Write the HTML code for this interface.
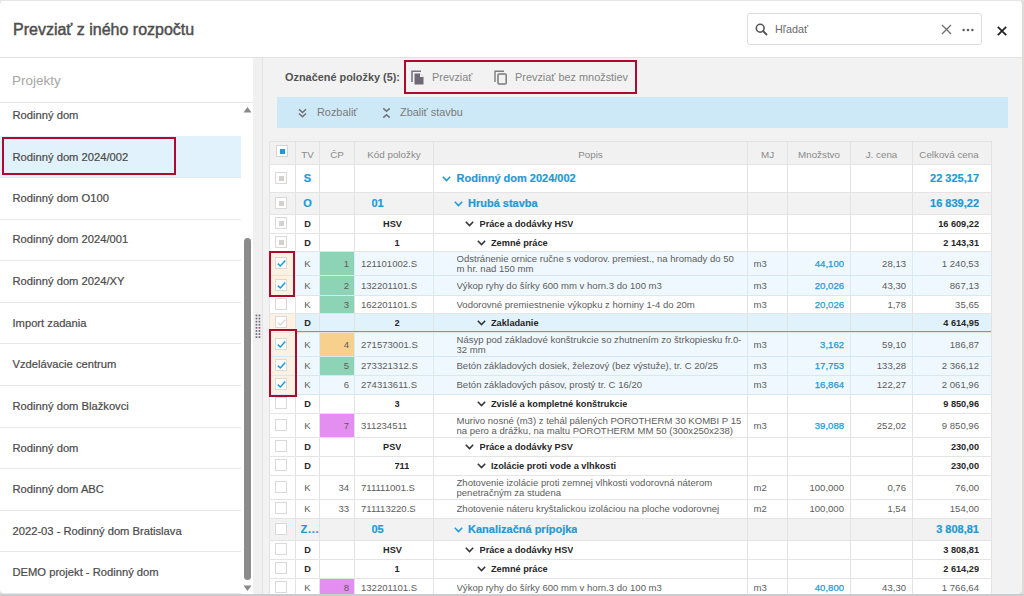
<!DOCTYPE html>
<html><head><meta charset="utf-8"><style>
*{box-sizing:border-box;margin:0;padding:0}
html,body{width:1024px;height:596px;overflow:hidden;background:#dedbd9;font-family:"Liberation Sans", sans-serif}
#topstrip{position:absolute;left:0;top:0;width:1024px;height:1px;background:#e6e6e6}
#botstrip{position:absolute;left:0;top:594px;width:1024px;height:2px;background:#cbcccd}
#modal{position:absolute;left:0;top:0;width:1022px;height:594px;background:#fff;border-radius:5px;overflow:hidden}
#hdr{position:absolute;left:0;top:1px;width:1022px;height:57px;border-bottom:1px solid #e2e2e2;background:#fff}
#title{position:absolute;left:13px;top:20.5px;font-size:16px;line-height:16px;color:#4e4e4e;white-space:nowrap;-webkit-text-stroke:0.45px #4e4e4e}
#search{position:absolute;left:747px;top:12px;width:235px;height:32px;border:1px solid #dcdcdc;border-radius:3px;background:#fff}
#search .ph{position:absolute;left:27px;top:10px;font-size:10.8px;line-height:11px;color:#6a6a6a}
#side{position:absolute;left:0;top:58px;width:253px;height:536px;background:#fff;overflow:hidden}
#side .proj{position:absolute;left:12px;top:16px;font-size:13.5px;line-height:13px;color:#a6a6a6}
#side .sep0{position:absolute;left:0;top:44px;width:253px;height:1px;background:#e4e4e4}
.item{position:absolute;left:0;width:241px;font-size:11.2px;color:#4a4a4a;padding-left:13px;white-space:nowrap;-webkit-text-stroke:0.2px #4a4a4a}
.item span{position:absolute;left:12.5px}
.sepl{position:absolute;left:0;width:241px;height:1px;background:#e8e8e8}
#splitter{position:absolute;left:253px;top:58px;width:10px;height:536px;background:#f0f0f0;border-right:1px solid #e4e4e4}
#content{position:absolute;left:263px;top:58px;width:759px;height:536px;background:#f2f2f2}
.abs{position:absolute;white-space:nowrap}
.redbox{position:absolute;border:2px solid #ad0a2e}
.cell{position:absolute;white-space:nowrap;overflow:hidden}
</style></head><body>
<div id="botstrip"></div><div id="modal">
<div id="hdr"><div id="title">Prevziať z iného rozpočtu</div>
<div id="search"><svg class="abs" style="left:7px;top:9px" width="14" height="14" viewBox="0 0 14 14"><circle cx="5.2" cy="5.2" r="3.9" fill="none" stroke="#555" stroke-width="1.6"/><line x1="8" y1="8" x2="11.5" y2="11.5" stroke="#555" stroke-width="1.8" stroke-linecap="round"/></svg><span class="ph">Hľadať</span><svg class="abs" style="left:193px;top:10px" width="11" height="11" viewBox="0 0 11 11"><path d="M1 1L10 10M10 1L1 10" stroke="#6f6f6f" stroke-width="1.3"/></svg><svg class="abs" style="left:214px;top:13.5px" width="12" height="4" viewBox="0 0 12 4"><circle cx="1.6" cy="2" r="1.25" fill="#5a5a5a"/><circle cx="6" cy="2" r="1.25" fill="#5a5a5a"/><circle cx="10.4" cy="2" r="1.25" fill="#5a5a5a"/></svg></div>
<svg class="abs" style="left:996.5px;top:25px" width="10" height="10" viewBox="0 0 10 10"><path d="M0.8 0.8L9.2 9.2M9.2 0.8L0.8 9.2" stroke="#222" stroke-width="1.75"/></svg>
</div>
<div id="side"><div class="proj">Projekty</div><div class="sep0"></div>
<div class="abs" style="left:0;top:78px;width:241px;height:41px;background:#e2f2fc"></div>
<div class="item" style="top:51.3px;height:13px;line-height:13px"><span>Rodinný dom</span></div>
<div class="item" style="top:92.8px;height:13px;line-height:13px"><span>Rodinný dom 2024/002</span></div>
<div class="item" style="top:133.8px;height:13px;line-height:13px"><span>Rodinný dom O100</span></div>
<div class="item" style="top:175.3px;height:13px;line-height:13px"><span>Rodinný dom 2024/001</span></div>
<div class="item" style="top:217.3px;height:13px;line-height:13px"><span>Rodinný dom 2024/XY</span></div>
<div class="item" style="top:258.8px;height:13px;line-height:13px"><span>Import zadania</span></div>
<div class="item" style="top:300.3px;height:13px;line-height:13px"><span>Vzdelávacie centrum</span></div>
<div class="item" style="top:342.3px;height:13px;line-height:13px"><span>Rodinný dom Blažkovci</span></div>
<div class="item" style="top:383.8px;height:13px;line-height:13px"><span>Rodinný dom</span></div>
<div class="item" style="top:425.3px;height:13px;line-height:13px"><span>Rodinný dom ABC</span></div>
<div class="item" style="top:466.8px;height:13px;line-height:13px"><span>2022-03 - Rodinný dom Bratislava</span></div>
<div class="item" style="top:508.3px;height:13px;line-height:13px"><span>DEMO projekt - Rodinný dom</span></div>
<div class="sepl" style="top:119px"></div>
<div class="sepl" style="top:161px"></div>
<div class="sepl" style="top:202px"></div>
<div class="sepl" style="top:244px"></div>
<div class="sepl" style="top:285px"></div>
<div class="sepl" style="top:327px"></div>
<div class="sepl" style="top:369px"></div>
<div class="sepl" style="top:410px"></div>
<div class="sepl" style="top:452px"></div>
<div class="sepl" style="top:493px"></div>
<div class="sepl" style="top:535px"></div>
<svg class="abs" style="left:242.6px;top:47.5px" width="9" height="7" viewBox="0 0 9 7"><path d="M0.5 6.5L4.5 1L8.5 6.5Z" fill="#8a8a8a"/></svg>
<div class="abs" style="left:244px;top:180px;width:7px;height:342px;border-radius:3.5px;background:#8b8b8b"></div>
<svg class="abs" style="left:243px;top:527px" width="9" height="7" viewBox="0 0 9 7"><path d="M0.5 0.5L4.5 6L8.5 0.5Z" fill="#8a8a8a"/></svg>
</div>
<div class="redbox" style="left:2px;top:137px;width:174px;height:38px;border-width:2.5px"></div>
<div id="splitter">
<svg class="abs" style="left:1.5px;top:255.60000000000002px" width="7" height="26" viewBox="0 0 7 26"><rect x="0.6" y="0.60" width="1.7" height="1.7" fill="#6b6b7a"/><rect x="3.6" y="0.60" width="1.7" height="1.7" fill="#6b6b7a"/><rect x="0.6" y="3.70" width="1.7" height="1.7" fill="#6b6b7a"/><rect x="3.6" y="3.70" width="1.7" height="1.7" fill="#6b6b7a"/><rect x="0.6" y="6.80" width="1.7" height="1.7" fill="#6b6b7a"/><rect x="3.6" y="6.80" width="1.7" height="1.7" fill="#6b6b7a"/><rect x="0.6" y="9.90" width="1.7" height="1.7" fill="#6b6b7a"/><rect x="3.6" y="9.90" width="1.7" height="1.7" fill="#6b6b7a"/><rect x="0.6" y="13.00" width="1.7" height="1.7" fill="#6b6b7a"/><rect x="3.6" y="13.00" width="1.7" height="1.7" fill="#6b6b7a"/><rect x="0.6" y="16.10" width="1.7" height="1.7" fill="#6b6b7a"/><rect x="3.6" y="16.10" width="1.7" height="1.7" fill="#6b6b7a"/><rect x="0.6" y="19.20" width="1.7" height="1.7" fill="#6b6b7a"/><rect x="3.6" y="19.20" width="1.7" height="1.7" fill="#6b6b7a"/><rect x="0.6" y="22.30" width="1.7" height="1.7" fill="#6b6b7a"/><rect x="3.6" y="22.30" width="1.7" height="1.7" fill="#6b6b7a"/></svg>
</div>
<div id="content">
</div>
<div class="abs" style="left:285px;top:72px;font-size:10.9px;line-height:11px;font-weight:bold;color:#525252">Označené položky (5):</div>
<svg class="abs" style="left:411px;top:69px" width="14" height="16" viewBox="0 0 14 16"><path d="M1 13V2.2h9" fill="none" stroke="#7a7384" stroke-width="1.6"/><path d="M3.5 4.5h5.5l3.5 3.5v7.5h-9z" fill="#6e6879"/><path d="M9 4.5v3.5h3.5" fill="#f2f2f2"/></svg>
<div class="abs" style="left:432px;top:72px;font-size:10.9px;line-height:11px;color:#858585">Prevziať</div>
<svg class="abs" style="left:494px;top:69px" width="14" height="16" viewBox="0 0 14 16"><path d="M1 13V2.2h9" fill="none" stroke="#7d7d7d" stroke-width="1.4"/><rect x="4" y="5" width="8.2" height="10" rx="1" fill="none" stroke="#7a7a7a" stroke-width="1.5"/></svg>
<div class="abs" style="left:515px;top:72px;font-size:10.9px;line-height:11px;color:#858585">Prevziať bez množstiev</div>
<div class="redbox" style="left:404px;top:60px;width:233px;height:34px"></div>
<div class="abs" style="left:277px;top:97px;width:731px;height:31px;background:#cde9f7"></div>
<svg class="abs" style="left:298px;top:108px" width="9" height="10" viewBox="0 0 9 10"><path d="M1 1.2L4.5 4.5L8 1.2M1 5.5L4.5 8.8L8 5.5" fill="none" stroke="#6f6f6f" stroke-width="1.5"/></svg>
<div class="abs" style="left:317px;top:107px;font-size:10.9px;line-height:11px;color:#7a7a7a">Rozbaliť</div>
<svg class="abs" style="left:382px;top:107px" width="9" height="12" viewBox="0 0 9 12"><path d="M1.3 1.4L4.5 4.3L7.7 1.4M1.3 10.6L4.5 7.7L7.7 10.6" fill="none" stroke="#707070" stroke-width="1.45"/></svg>
<div class="abs" style="left:400px;top:107px;font-size:10.9px;line-height:11px;color:#7a7a7a">Zbaliť stavbu</div>
<div class="abs" style="left:269px;top:141px;width:723px;height:23px;background:#f1f1f1;border-top:1px solid #e3e3e3"></div>
<div class="cell" style="left:296px;top:149.5px;width:23px;text-align:center;font-size:9.8px;line-height:10px;color:#8a8a8a">TV</div>
<div class="cell" style="left:320px;top:149.5px;width:34px;text-align:center;font-size:9.8px;line-height:10px;color:#8a8a8a">ČP</div>
<div class="cell" style="left:355px;top:149.5px;width:78px;text-align:center;font-size:9.8px;line-height:10px;color:#8a8a8a">Kód položky</div>
<div class="cell" style="left:434px;top:149.5px;width:313px;text-align:center;font-size:9.8px;line-height:10px;color:#8a8a8a">Popis</div>
<div class="cell" style="left:748px;top:149.5px;width:39px;text-align:center;font-size:9.8px;line-height:10px;color:#8a8a8a">MJ</div>
<div class="cell" style="left:788px;top:149.5px;width:62px;text-align:center;font-size:9.8px;line-height:10px;color:#8a8a8a">Množstvo</div>
<div class="cell" style="left:851px;top:149.5px;width:61px;text-align:center;font-size:9.8px;line-height:10px;color:#8a8a8a">J. cena</div>
<div class="cell" style="left:910px;top:149.5px;width:78px;text-align:center;font-size:9.8px;line-height:10px;color:#8a8a8a">Celková cena</div>
<div class="abs" style="left:276px;top:145px;width:12px;height:12px;border:1px solid #d4d4d4;background:#fff"><div class="abs" style="left:3px;top:3px;width:5px;height:5px;background:#1e9ad8"></div></div>
<div class="abs" style="left:269px;top:164px;width:723px;height:28px;background:#ffffff;border-top:1px solid #e4e4e4"></div>
<div class="abs" style="left:269px;top:165px;width:1px;height:27px;background:#e3e3e3"></div>
<div class="abs" style="left:295px;top:165px;width:1px;height:27px;background:#e3e3e3"></div>
<div class="abs" style="left:319px;top:165px;width:1px;height:27px;background:#e3e3e3"></div>
<div class="abs" style="left:354px;top:165px;width:1px;height:27px;background:#e3e3e3"></div>
<div class="abs" style="left:433px;top:165px;width:1px;height:27px;background:#e3e3e3"></div>
<div class="abs" style="left:747px;top:165px;width:1px;height:27px;background:#e3e3e3"></div>
<div class="abs" style="left:787px;top:165px;width:1px;height:27px;background:#e3e3e3"></div>
<div class="abs" style="left:850px;top:165px;width:1px;height:27px;background:#e3e3e3"></div>
<div class="abs" style="left:912px;top:165px;width:1px;height:27px;background:#e3e3e3"></div>
<div class="abs" style="left:991px;top:165px;width:1px;height:27px;background:#e3e3e3"></div>
<div class="abs" style="left:275px;top:172px;width:12px;height:12px;border:1px solid #d9d9d9;background:#fff"><div class="abs" style="left:3px;top:3px;width:5px;height:5px;background:#d6d1cd"></div></div>
<div class="cell" style="left:296px;top:171.5px;width:23px;text-align:center;font-size:11px;font-weight:bold;color:#1d9ad6;line-height:12px;-webkit-text-stroke:0.2px #1d9ad6">S</div>
<svg class="abs" style="left:442.0px;top:175.5px" width="9" height="6" viewBox="0 0 9 6"><path d="M0.8 0.8L4.5 4.6L8.2 0.8" fill="none" stroke="#1d9ad6" stroke-width="1.5"/></svg>
<div class="cell" style="left:456.5px;top:171.5px;font-size:11px;font-weight:bold;color:#1d9ad6;line-height:12px;-webkit-text-stroke:0.2px #1d9ad6">Rodinný dom 2024/002</div>
<div class="cell" style="left:912px;top:171.5px;width:67px;text-align:right;font-size:11px;font-weight:bold;color:#1d9ad6;line-height:12px;-webkit-text-stroke:0.2px #1d9ad6">22 325,17</div>
<div class="abs" style="left:269px;top:192px;width:723px;height:22px;background:#f2f2f2;border-top:1px solid #e4e4e4"></div>
<div class="abs" style="left:269px;top:193px;width:1px;height:21px;background:#e3e3e3"></div>
<div class="abs" style="left:295px;top:193px;width:1px;height:21px;background:#e3e3e3"></div>
<div class="abs" style="left:319px;top:193px;width:1px;height:21px;background:#e3e3e3"></div>
<div class="abs" style="left:354px;top:193px;width:1px;height:21px;background:#e3e3e3"></div>
<div class="abs" style="left:433px;top:193px;width:1px;height:21px;background:#e3e3e3"></div>
<div class="abs" style="left:747px;top:193px;width:1px;height:21px;background:#e3e3e3"></div>
<div class="abs" style="left:787px;top:193px;width:1px;height:21px;background:#e3e3e3"></div>
<div class="abs" style="left:850px;top:193px;width:1px;height:21px;background:#e3e3e3"></div>
<div class="abs" style="left:912px;top:193px;width:1px;height:21px;background:#e3e3e3"></div>
<div class="abs" style="left:991px;top:193px;width:1px;height:21px;background:#e3e3e3"></div>
<div class="abs" style="left:275px;top:197px;width:12px;height:12px;border:1px solid #d9d9d9;background:#fff"><div class="abs" style="left:3px;top:3px;width:5px;height:5px;background:#d6d1cd"></div></div>
<div class="cell" style="left:296px;top:196.5px;width:23px;text-align:center;font-size:11px;font-weight:bold;color:#1d9ad6;line-height:12px;-webkit-text-stroke:0.2px #1d9ad6">O</div>
<div class="cell" style="left:371.5px;top:196.5px;font-size:11px;font-weight:bold;color:#1d9ad6;line-height:12px;-webkit-text-stroke:0.2px #1d9ad6">01</div>
<svg class="abs" style="left:453.5px;top:200.5px" width="9" height="6" viewBox="0 0 9 6"><path d="M0.8 0.8L4.5 4.6L8.2 0.8" fill="none" stroke="#1d9ad6" stroke-width="1.5"/></svg>
<div class="cell" style="left:468.0px;top:196.5px;font-size:11px;font-weight:bold;color:#1d9ad6;line-height:12px;-webkit-text-stroke:0.2px #1d9ad6">Hrubá stavba</div>
<div class="cell" style="left:912px;top:196.5px;width:67px;text-align:right;font-size:11px;font-weight:bold;color:#1d9ad6;line-height:12px;-webkit-text-stroke:0.2px #1d9ad6">16 839,22</div>
<div class="abs" style="left:269px;top:214px;width:723px;height:19px;background:#ffffff;border-top:1px solid #e4e4e4"></div>
<div class="abs" style="left:269px;top:215px;width:1px;height:18px;background:#e3e3e3"></div>
<div class="abs" style="left:295px;top:215px;width:1px;height:18px;background:#e3e3e3"></div>
<div class="abs" style="left:319px;top:215px;width:1px;height:18px;background:#e3e3e3"></div>
<div class="abs" style="left:354px;top:215px;width:1px;height:18px;background:#e3e3e3"></div>
<div class="abs" style="left:433px;top:215px;width:1px;height:18px;background:#e3e3e3"></div>
<div class="abs" style="left:747px;top:215px;width:1px;height:18px;background:#e3e3e3"></div>
<div class="abs" style="left:787px;top:215px;width:1px;height:18px;background:#e3e3e3"></div>
<div class="abs" style="left:850px;top:215px;width:1px;height:18px;background:#e3e3e3"></div>
<div class="abs" style="left:912px;top:215px;width:1px;height:18px;background:#e3e3e3"></div>
<div class="abs" style="left:991px;top:215px;width:1px;height:18px;background:#e3e3e3"></div>
<div class="abs" style="left:275px;top:217px;width:12px;height:12px;border:1px solid #d9d9d9;background:#fff"><div class="abs" style="left:3px;top:3px;width:5px;height:5px;background:#d6d1cd"></div></div>
<div class="cell" style="left:296px;top:219.0px;width:23px;text-align:center;font-size:9.2px;font-weight:bold;color:#262626;line-height:10px">D</div>
<div class="cell" style="left:383.0px;top:219.0px;font-size:9.2px;font-weight:bold;color:#262626;line-height:10px">HSV</div>
<svg class="abs" style="left:465.0px;top:221.0px" width="9" height="6" viewBox="0 0 9 6"><path d="M0.8 0.8L4.5 4.6L8.2 0.8" fill="none" stroke="#333" stroke-width="1.5"/></svg>
<div class="cell" style="left:479.5px;top:219.0px;font-size:9.2px;font-weight:bold;color:#262626;line-height:10px">Práce a dodávky HSV</div>
<div class="cell" style="left:912px;top:219.0px;width:67px;text-align:right;font-size:9.2px;font-weight:bold;color:#262626;line-height:10px">16 609,22</div>
<div class="abs" style="left:269px;top:233px;width:723px;height:18px;background:#ffffff;border-top:1px solid #e4e4e4"></div>
<div class="abs" style="left:269px;top:234px;width:1px;height:17px;background:#e3e3e3"></div>
<div class="abs" style="left:295px;top:234px;width:1px;height:17px;background:#e3e3e3"></div>
<div class="abs" style="left:319px;top:234px;width:1px;height:17px;background:#e3e3e3"></div>
<div class="abs" style="left:354px;top:234px;width:1px;height:17px;background:#e3e3e3"></div>
<div class="abs" style="left:433px;top:234px;width:1px;height:17px;background:#e3e3e3"></div>
<div class="abs" style="left:747px;top:234px;width:1px;height:17px;background:#e3e3e3"></div>
<div class="abs" style="left:787px;top:234px;width:1px;height:17px;background:#e3e3e3"></div>
<div class="abs" style="left:850px;top:234px;width:1px;height:17px;background:#e3e3e3"></div>
<div class="abs" style="left:912px;top:234px;width:1px;height:17px;background:#e3e3e3"></div>
<div class="abs" style="left:991px;top:234px;width:1px;height:17px;background:#e3e3e3"></div>
<div class="abs" style="left:275px;top:236px;width:12px;height:12px;border:1px solid #d9d9d9;background:#fff"><div class="abs" style="left:3px;top:3px;width:5px;height:5px;background:#d6d1cd"></div></div>
<div class="cell" style="left:296px;top:237.5px;width:23px;text-align:center;font-size:9.2px;font-weight:bold;color:#262626;line-height:10px">D</div>
<div class="cell" style="left:394.5px;top:237.5px;font-size:9.2px;font-weight:bold;color:#262626;line-height:10px">1</div>
<svg class="abs" style="left:476.5px;top:239.5px" width="9" height="6" viewBox="0 0 9 6"><path d="M0.8 0.8L4.5 4.6L8.2 0.8" fill="none" stroke="#333" stroke-width="1.5"/></svg>
<div class="cell" style="left:491.0px;top:237.5px;font-size:9.2px;font-weight:bold;color:#262626;line-height:10px">Zemné práce</div>
<div class="cell" style="left:912px;top:237.5px;width:67px;text-align:right;font-size:9.2px;font-weight:bold;color:#262626;line-height:10px">2 143,31</div>
<div class="abs" style="left:269px;top:251px;width:723px;height:24px;background:#eff8fe;border-top:1px solid #e4e4e4"></div>
<div class="abs" style="left:269px;top:252px;width:1px;height:23px;background:#e3e3e3"></div>
<div class="abs" style="left:295px;top:252px;width:1px;height:23px;background:#d9ebf7"></div>
<div class="abs" style="left:319px;top:252px;width:1px;height:23px;background:#d9ebf7"></div>
<div class="abs" style="left:354px;top:252px;width:1px;height:23px;background:#d9ebf7"></div>
<div class="abs" style="left:433px;top:252px;width:1px;height:23px;background:#d9ebf7"></div>
<div class="abs" style="left:747px;top:252px;width:1px;height:23px;background:#d9ebf7"></div>
<div class="abs" style="left:787px;top:252px;width:1px;height:23px;background:#d9ebf7"></div>
<div class="abs" style="left:850px;top:252px;width:1px;height:23px;background:#d9ebf7"></div>
<div class="abs" style="left:912px;top:252px;width:1px;height:23px;background:#d9ebf7"></div>
<div class="abs" style="left:991px;top:252px;width:1px;height:23px;background:#e3e3e3"></div>
<div class="abs" style="left:270px;top:252px;width:25px;height:23px;background:#fdf1e2"></div>
<div class="abs" style="left:320px;top:252px;width:34px;height:23px;background:#8dd3b6"></div>
<div class="abs" style="left:275px;top:257px;width:12px;height:12px;border:1px solid #d9d9d9;background:#fff"><svg class="abs" style="left:1px;top:1px" width="9" height="9" viewBox="0 0 9 9"><path d="M0.8 4.6L3.3 7L8.3 1.6" fill="none" stroke="#1e9ad8" stroke-width="1.5"/></svg></div>
<div class="cell" style="left:296px;top:258.5px;width:23px;text-align:center;font-size:9.55px;font-weight:normal;color:#5c5c5c;line-height:10px">K</div>
<div class="cell" style="left:319px;top:258.5px;width:30px;text-align:right;font-size:9.55px;font-weight:normal;color:#5c5c5c;line-height:10px">1</div>
<div class="cell" style="left:361px;top:258.5px;font-size:9.55px;font-weight:normal;color:#5c5c5c;line-height:10px">121101002.S</div>
<div class="cell" style="left:456.5px;top:253.5px;font-size:9.55px;font-weight:normal;color:#5c5c5c;line-height:10px">Odstránenie ornice ručne s vodorov. premiest., na hromady do 50<br>m hr. nad 150 mm</div>
<div class="cell" style="left:753.5px;top:258.5px;font-size:9.55px;font-weight:normal;color:#5c5c5c;line-height:10px">m3</div>
<div class="cell" style="left:787px;top:258.5px;width:57px;text-align:right;font-size:9.55px;font-weight:normal;color:#5c5c5c;line-height:10px;color:#1d9ad6;-webkit-text-stroke:0.25px #1d9ad6">44,100</div>
<div class="cell" style="left:850px;top:258.5px;width:56px;text-align:right;font-size:9.55px;font-weight:normal;color:#5c5c5c;line-height:10px">28,13</div>
<div class="cell" style="left:912px;top:258.5px;width:67px;text-align:right;font-size:9.55px;font-weight:normal;color:#5c5c5c;line-height:10px">1 240,53</div>
<div class="abs" style="left:269px;top:275px;width:723px;height:20px;background:#eff8fe;border-top:1px solid #d4e8f5"></div>
<div class="abs" style="left:269px;top:276px;width:1px;height:19px;background:#e3e3e3"></div>
<div class="abs" style="left:295px;top:276px;width:1px;height:19px;background:#d9ebf7"></div>
<div class="abs" style="left:319px;top:276px;width:1px;height:19px;background:#d9ebf7"></div>
<div class="abs" style="left:354px;top:276px;width:1px;height:19px;background:#d9ebf7"></div>
<div class="abs" style="left:433px;top:276px;width:1px;height:19px;background:#d9ebf7"></div>
<div class="abs" style="left:747px;top:276px;width:1px;height:19px;background:#d9ebf7"></div>
<div class="abs" style="left:787px;top:276px;width:1px;height:19px;background:#d9ebf7"></div>
<div class="abs" style="left:850px;top:276px;width:1px;height:19px;background:#d9ebf7"></div>
<div class="abs" style="left:912px;top:276px;width:1px;height:19px;background:#d9ebf7"></div>
<div class="abs" style="left:991px;top:276px;width:1px;height:19px;background:#e3e3e3"></div>
<div class="abs" style="left:270px;top:276px;width:25px;height:19px;background:#fdf1e2"></div>
<div class="abs" style="left:320px;top:276px;width:34px;height:19px;background:#8dd3b6"></div>
<div class="abs" style="left:275px;top:279px;width:12px;height:12px;border:1px solid #d9d9d9;background:#fff"><svg class="abs" style="left:1px;top:1px" width="9" height="9" viewBox="0 0 9 9"><path d="M0.8 4.6L3.3 7L8.3 1.6" fill="none" stroke="#1e9ad8" stroke-width="1.5"/></svg></div>
<div class="cell" style="left:296px;top:280.5px;width:23px;text-align:center;font-size:9.55px;font-weight:normal;color:#5c5c5c;line-height:10px">K</div>
<div class="cell" style="left:319px;top:280.5px;width:30px;text-align:right;font-size:9.55px;font-weight:normal;color:#5c5c5c;line-height:10px">2</div>
<div class="cell" style="left:361px;top:280.5px;font-size:9.55px;font-weight:normal;color:#5c5c5c;line-height:10px">132201101.S</div>
<div class="cell" style="left:456.5px;top:280.5px;font-size:9.55px;font-weight:normal;color:#5c5c5c;line-height:10px">Výkop ryhy do šírky 600 mm v horn.3 do 100 m3</div>
<div class="cell" style="left:753.5px;top:280.5px;font-size:9.55px;font-weight:normal;color:#5c5c5c;line-height:10px">m3</div>
<div class="cell" style="left:787px;top:280.5px;width:57px;text-align:right;font-size:9.55px;font-weight:normal;color:#5c5c5c;line-height:10px;color:#1d9ad6;-webkit-text-stroke:0.25px #1d9ad6">20,026</div>
<div class="cell" style="left:850px;top:280.5px;width:56px;text-align:right;font-size:9.55px;font-weight:normal;color:#5c5c5c;line-height:10px">43,30</div>
<div class="cell" style="left:912px;top:280.5px;width:67px;text-align:right;font-size:9.55px;font-weight:normal;color:#5c5c5c;line-height:10px">867,13</div>
<div class="abs" style="left:269px;top:295px;width:723px;height:18px;background:#ffffff;border-top:1px solid #d4e8f5"></div>
<div class="abs" style="left:269px;top:296px;width:1px;height:17px;background:#e3e3e3"></div>
<div class="abs" style="left:295px;top:296px;width:1px;height:17px;background:#e3e3e3"></div>
<div class="abs" style="left:319px;top:296px;width:1px;height:17px;background:#e3e3e3"></div>
<div class="abs" style="left:354px;top:296px;width:1px;height:17px;background:#e3e3e3"></div>
<div class="abs" style="left:433px;top:296px;width:1px;height:17px;background:#e3e3e3"></div>
<div class="abs" style="left:747px;top:296px;width:1px;height:17px;background:#e3e3e3"></div>
<div class="abs" style="left:787px;top:296px;width:1px;height:17px;background:#e3e3e3"></div>
<div class="abs" style="left:850px;top:296px;width:1px;height:17px;background:#e3e3e3"></div>
<div class="abs" style="left:912px;top:296px;width:1px;height:17px;background:#e3e3e3"></div>
<div class="abs" style="left:991px;top:296px;width:1px;height:17px;background:#e3e3e3"></div>
<div class="abs" style="left:320px;top:296px;width:34px;height:17px;background:#8dd3b6"></div>
<div class="abs" style="left:275px;top:298px;width:12px;height:12px;border:1px solid #d9d9d9;background:#fff"></div>
<div class="cell" style="left:296px;top:299.5px;width:23px;text-align:center;font-size:9.55px;font-weight:normal;color:#5c5c5c;line-height:10px">K</div>
<div class="cell" style="left:319px;top:299.5px;width:30px;text-align:right;font-size:9.55px;font-weight:normal;color:#5c5c5c;line-height:10px">3</div>
<div class="cell" style="left:361px;top:299.5px;font-size:9.55px;font-weight:normal;color:#5c5c5c;line-height:10px">162201101.S</div>
<div class="cell" style="left:456.5px;top:299.5px;font-size:9.55px;font-weight:normal;color:#5c5c5c;line-height:10px">Vodorovné premiestnenie výkopku z horniny 1-4 do 20m</div>
<div class="cell" style="left:753.5px;top:299.5px;font-size:9.55px;font-weight:normal;color:#5c5c5c;line-height:10px">m3</div>
<div class="cell" style="left:787px;top:299.5px;width:57px;text-align:right;font-size:9.55px;font-weight:normal;color:#5c5c5c;line-height:10px;color:#1d9ad6;-webkit-text-stroke:0.25px #1d9ad6">20,026</div>
<div class="cell" style="left:850px;top:299.5px;width:56px;text-align:right;font-size:9.55px;font-weight:normal;color:#5c5c5c;line-height:10px">1,78</div>
<div class="cell" style="left:912px;top:299.5px;width:67px;text-align:right;font-size:9.55px;font-weight:normal;color:#5c5c5c;line-height:10px">35,65</div>
<div class="abs" style="left:269px;top:313px;width:723px;height:19px;background:#e0f2fc;border-top:1px solid #e4e4e4"></div>
<div class="abs" style="left:269px;top:314px;width:1px;height:18px;background:#e3e3e3"></div>
<div class="abs" style="left:295px;top:314px;width:1px;height:18px;background:#e3e3e3"></div>
<div class="abs" style="left:319px;top:314px;width:1px;height:18px;background:#e3e3e3"></div>
<div class="abs" style="left:354px;top:314px;width:1px;height:18px;background:#e3e3e3"></div>
<div class="abs" style="left:433px;top:314px;width:1px;height:18px;background:#e3e3e3"></div>
<div class="abs" style="left:747px;top:314px;width:1px;height:18px;background:#e3e3e3"></div>
<div class="abs" style="left:787px;top:314px;width:1px;height:18px;background:#e3e3e3"></div>
<div class="abs" style="left:850px;top:314px;width:1px;height:18px;background:#e3e3e3"></div>
<div class="abs" style="left:912px;top:314px;width:1px;height:18px;background:#e3e3e3"></div>
<div class="abs" style="left:991px;top:314px;width:1px;height:18px;background:#e3e3e3"></div>
<div class="abs" style="left:270px;top:314px;width:25px;height:18px;background:#fdf1e2"></div>
<div class="abs" style="left:296px;top:331px;width:695px;height:2px;background:#42abe1"></div>
<div class="abs" style="left:275px;top:316px;width:12px;height:12px;border:1px solid #d9d9d9;background:#fff"><svg class="abs" style="left:1px;top:1px" width="9" height="9" viewBox="0 0 9 9"><path d="M0.8 4.6L3.3 7L8.3 1.6" fill="none" stroke="#d8d8d8" stroke-width="1.3"/></svg></div>
<div class="cell" style="left:296px;top:318.0px;width:23px;text-align:center;font-size:9.2px;font-weight:bold;color:#262626;line-height:10px">D</div>
<div class="cell" style="left:394.5px;top:318.0px;font-size:9.2px;font-weight:bold;color:#262626;line-height:10px">2</div>
<svg class="abs" style="left:476.5px;top:320.0px" width="9" height="6" viewBox="0 0 9 6"><path d="M0.8 0.8L4.5 4.6L8.2 0.8" fill="none" stroke="#333" stroke-width="1.5"/></svg>
<div class="cell" style="left:491.0px;top:318.0px;font-size:9.2px;font-weight:bold;color:#262626;line-height:10px">Zakladanie</div>
<div class="cell" style="left:912px;top:318.0px;width:67px;text-align:right;font-size:9.2px;font-weight:bold;color:#262626;line-height:10px">4 614,95</div>
<div class="abs" style="left:269px;top:332px;width:723px;height:24px;background:#eff8fe;border-top:1px solid #e4e4e4"></div>
<div class="abs" style="left:269px;top:333px;width:1px;height:23px;background:#e3e3e3"></div>
<div class="abs" style="left:295px;top:333px;width:1px;height:23px;background:#d9ebf7"></div>
<div class="abs" style="left:319px;top:333px;width:1px;height:23px;background:#d9ebf7"></div>
<div class="abs" style="left:354px;top:333px;width:1px;height:23px;background:#d9ebf7"></div>
<div class="abs" style="left:433px;top:333px;width:1px;height:23px;background:#d9ebf7"></div>
<div class="abs" style="left:747px;top:333px;width:1px;height:23px;background:#d9ebf7"></div>
<div class="abs" style="left:787px;top:333px;width:1px;height:23px;background:#d9ebf7"></div>
<div class="abs" style="left:850px;top:333px;width:1px;height:23px;background:#d9ebf7"></div>
<div class="abs" style="left:912px;top:333px;width:1px;height:23px;background:#d9ebf7"></div>
<div class="abs" style="left:991px;top:333px;width:1px;height:23px;background:#e3e3e3"></div>
<div class="abs" style="left:270px;top:333px;width:25px;height:23px;background:#fdf1e2"></div>
<div class="abs" style="left:320px;top:333px;width:34px;height:23px;background:#f7d08e"></div>
<div class="abs" style="left:275px;top:338px;width:12px;height:12px;border:1px solid #d9d9d9;background:#fff"><svg class="abs" style="left:1px;top:1px" width="9" height="9" viewBox="0 0 9 9"><path d="M0.8 4.6L3.3 7L8.3 1.6" fill="none" stroke="#1e9ad8" stroke-width="1.5"/></svg></div>
<div class="cell" style="left:296px;top:339.5px;width:23px;text-align:center;font-size:9.55px;font-weight:normal;color:#5c5c5c;line-height:10px">K</div>
<div class="cell" style="left:319px;top:339.5px;width:30px;text-align:right;font-size:9.55px;font-weight:normal;color:#5c5c5c;line-height:10px">4</div>
<div class="cell" style="left:361px;top:339.5px;font-size:9.55px;font-weight:normal;color:#5c5c5c;line-height:10px">271573001.S</div>
<div class="cell" style="left:456.5px;top:334.5px;font-size:9.55px;font-weight:normal;color:#5c5c5c;line-height:10px">Násyp pod základové konštrukcie so zhutnením zo štrkopiesku fr.0-<br>32 mm</div>
<div class="cell" style="left:753.5px;top:339.5px;font-size:9.55px;font-weight:normal;color:#5c5c5c;line-height:10px">m3</div>
<div class="cell" style="left:787px;top:339.5px;width:57px;text-align:right;font-size:9.55px;font-weight:normal;color:#5c5c5c;line-height:10px;color:#1d9ad6;-webkit-text-stroke:0.25px #1d9ad6">3,162</div>
<div class="cell" style="left:850px;top:339.5px;width:56px;text-align:right;font-size:9.55px;font-weight:normal;color:#5c5c5c;line-height:10px">59,10</div>
<div class="cell" style="left:912px;top:339.5px;width:67px;text-align:right;font-size:9.55px;font-weight:normal;color:#5c5c5c;line-height:10px">186,87</div>
<div class="abs" style="left:269px;top:356px;width:723px;height:19px;background:#eff8fe;border-top:1px solid #d4e8f5"></div>
<div class="abs" style="left:269px;top:357px;width:1px;height:18px;background:#e3e3e3"></div>
<div class="abs" style="left:295px;top:357px;width:1px;height:18px;background:#d9ebf7"></div>
<div class="abs" style="left:319px;top:357px;width:1px;height:18px;background:#d9ebf7"></div>
<div class="abs" style="left:354px;top:357px;width:1px;height:18px;background:#d9ebf7"></div>
<div class="abs" style="left:433px;top:357px;width:1px;height:18px;background:#d9ebf7"></div>
<div class="abs" style="left:747px;top:357px;width:1px;height:18px;background:#d9ebf7"></div>
<div class="abs" style="left:787px;top:357px;width:1px;height:18px;background:#d9ebf7"></div>
<div class="abs" style="left:850px;top:357px;width:1px;height:18px;background:#d9ebf7"></div>
<div class="abs" style="left:912px;top:357px;width:1px;height:18px;background:#d9ebf7"></div>
<div class="abs" style="left:991px;top:357px;width:1px;height:18px;background:#e3e3e3"></div>
<div class="abs" style="left:270px;top:357px;width:25px;height:18px;background:#fdf1e2"></div>
<div class="abs" style="left:320px;top:357px;width:34px;height:18px;background:#8dd3b6"></div>
<div class="abs" style="left:275px;top:359px;width:12px;height:12px;border:1px solid #d9d9d9;background:#fff"><svg class="abs" style="left:1px;top:1px" width="9" height="9" viewBox="0 0 9 9"><path d="M0.8 4.6L3.3 7L8.3 1.6" fill="none" stroke="#1e9ad8" stroke-width="1.5"/></svg></div>
<div class="cell" style="left:296px;top:361.0px;width:23px;text-align:center;font-size:9.55px;font-weight:normal;color:#5c5c5c;line-height:10px">K</div>
<div class="cell" style="left:319px;top:361.0px;width:30px;text-align:right;font-size:9.55px;font-weight:normal;color:#5c5c5c;line-height:10px">5</div>
<div class="cell" style="left:361px;top:361.0px;font-size:9.55px;font-weight:normal;color:#5c5c5c;line-height:10px">273321312.S</div>
<div class="cell" style="left:456.5px;top:361.0px;font-size:9.55px;font-weight:normal;color:#5c5c5c;line-height:10px">Betón základových dosiek, železový (bez výstuže), tr. C 20/25</div>
<div class="cell" style="left:753.5px;top:361.0px;font-size:9.55px;font-weight:normal;color:#5c5c5c;line-height:10px">m3</div>
<div class="cell" style="left:787px;top:361.0px;width:57px;text-align:right;font-size:9.55px;font-weight:normal;color:#5c5c5c;line-height:10px;color:#1d9ad6;-webkit-text-stroke:0.25px #1d9ad6">17,753</div>
<div class="cell" style="left:850px;top:361.0px;width:56px;text-align:right;font-size:9.55px;font-weight:normal;color:#5c5c5c;line-height:10px">133,28</div>
<div class="cell" style="left:912px;top:361.0px;width:67px;text-align:right;font-size:9.55px;font-weight:normal;color:#5c5c5c;line-height:10px">2 366,12</div>
<div class="abs" style="left:269px;top:375px;width:723px;height:19px;background:#eff8fe;border-top:1px solid #d4e8f5"></div>
<div class="abs" style="left:269px;top:376px;width:1px;height:18px;background:#e3e3e3"></div>
<div class="abs" style="left:295px;top:376px;width:1px;height:18px;background:#d9ebf7"></div>
<div class="abs" style="left:319px;top:376px;width:1px;height:18px;background:#d9ebf7"></div>
<div class="abs" style="left:354px;top:376px;width:1px;height:18px;background:#d9ebf7"></div>
<div class="abs" style="left:433px;top:376px;width:1px;height:18px;background:#d9ebf7"></div>
<div class="abs" style="left:747px;top:376px;width:1px;height:18px;background:#d9ebf7"></div>
<div class="abs" style="left:787px;top:376px;width:1px;height:18px;background:#d9ebf7"></div>
<div class="abs" style="left:850px;top:376px;width:1px;height:18px;background:#d9ebf7"></div>
<div class="abs" style="left:912px;top:376px;width:1px;height:18px;background:#d9ebf7"></div>
<div class="abs" style="left:991px;top:376px;width:1px;height:18px;background:#e3e3e3"></div>
<div class="abs" style="left:270px;top:376px;width:25px;height:18px;background:#fdf1e2"></div>
<div class="abs" style="left:275px;top:378px;width:12px;height:12px;border:1px solid #d9d9d9;background:#fff"><svg class="abs" style="left:1px;top:1px" width="9" height="9" viewBox="0 0 9 9"><path d="M0.8 4.6L3.3 7L8.3 1.6" fill="none" stroke="#1e9ad8" stroke-width="1.5"/></svg></div>
<div class="cell" style="left:296px;top:380.0px;width:23px;text-align:center;font-size:9.55px;font-weight:normal;color:#5c5c5c;line-height:10px">K</div>
<div class="cell" style="left:319px;top:380.0px;width:30px;text-align:right;font-size:9.55px;font-weight:normal;color:#5c5c5c;line-height:10px">6</div>
<div class="cell" style="left:361px;top:380.0px;font-size:9.55px;font-weight:normal;color:#5c5c5c;line-height:10px">274313611.S</div>
<div class="cell" style="left:456.5px;top:380.0px;font-size:9.55px;font-weight:normal;color:#5c5c5c;line-height:10px">Betón základových pásov, prostý tr. C 16/20</div>
<div class="cell" style="left:753.5px;top:380.0px;font-size:9.55px;font-weight:normal;color:#5c5c5c;line-height:10px">m3</div>
<div class="cell" style="left:787px;top:380.0px;width:57px;text-align:right;font-size:9.55px;font-weight:normal;color:#5c5c5c;line-height:10px;color:#1d9ad6;-webkit-text-stroke:0.25px #1d9ad6">16,864</div>
<div class="cell" style="left:850px;top:380.0px;width:56px;text-align:right;font-size:9.55px;font-weight:normal;color:#5c5c5c;line-height:10px">122,27</div>
<div class="cell" style="left:912px;top:380.0px;width:67px;text-align:right;font-size:9.55px;font-weight:normal;color:#5c5c5c;line-height:10px">2 061,96</div>
<div class="abs" style="left:269px;top:394px;width:723px;height:19px;background:#ffffff;border-top:1px solid #d4e8f5"></div>
<div class="abs" style="left:269px;top:395px;width:1px;height:18px;background:#e3e3e3"></div>
<div class="abs" style="left:295px;top:395px;width:1px;height:18px;background:#e3e3e3"></div>
<div class="abs" style="left:319px;top:395px;width:1px;height:18px;background:#e3e3e3"></div>
<div class="abs" style="left:354px;top:395px;width:1px;height:18px;background:#e3e3e3"></div>
<div class="abs" style="left:433px;top:395px;width:1px;height:18px;background:#e3e3e3"></div>
<div class="abs" style="left:747px;top:395px;width:1px;height:18px;background:#e3e3e3"></div>
<div class="abs" style="left:787px;top:395px;width:1px;height:18px;background:#e3e3e3"></div>
<div class="abs" style="left:850px;top:395px;width:1px;height:18px;background:#e3e3e3"></div>
<div class="abs" style="left:912px;top:395px;width:1px;height:18px;background:#e3e3e3"></div>
<div class="abs" style="left:991px;top:395px;width:1px;height:18px;background:#e3e3e3"></div>
<div class="abs" style="left:275px;top:397px;width:12px;height:12px;border:1px solid #d9d9d9;background:#fff"></div>
<div class="cell" style="left:296px;top:399.0px;width:23px;text-align:center;font-size:9.2px;font-weight:bold;color:#262626;line-height:10px">D</div>
<div class="cell" style="left:394.5px;top:399.0px;font-size:9.2px;font-weight:bold;color:#262626;line-height:10px">3</div>
<svg class="abs" style="left:476.5px;top:401.0px" width="9" height="6" viewBox="0 0 9 6"><path d="M0.8 0.8L4.5 4.6L8.2 0.8" fill="none" stroke="#333" stroke-width="1.5"/></svg>
<div class="cell" style="left:491.0px;top:399.0px;font-size:9.2px;font-weight:bold;color:#262626;line-height:10px">Zvislé a kompletné konštrukcie</div>
<div class="cell" style="left:912px;top:399.0px;width:67px;text-align:right;font-size:9.2px;font-weight:bold;color:#262626;line-height:10px">9 850,96</div>
<div class="abs" style="left:269px;top:413px;width:723px;height:24px;background:#ffffff;border-top:1px solid #e4e4e4"></div>
<div class="abs" style="left:269px;top:414px;width:1px;height:23px;background:#e3e3e3"></div>
<div class="abs" style="left:295px;top:414px;width:1px;height:23px;background:#e3e3e3"></div>
<div class="abs" style="left:319px;top:414px;width:1px;height:23px;background:#e3e3e3"></div>
<div class="abs" style="left:354px;top:414px;width:1px;height:23px;background:#e3e3e3"></div>
<div class="abs" style="left:433px;top:414px;width:1px;height:23px;background:#e3e3e3"></div>
<div class="abs" style="left:747px;top:414px;width:1px;height:23px;background:#e3e3e3"></div>
<div class="abs" style="left:787px;top:414px;width:1px;height:23px;background:#e3e3e3"></div>
<div class="abs" style="left:850px;top:414px;width:1px;height:23px;background:#e3e3e3"></div>
<div class="abs" style="left:912px;top:414px;width:1px;height:23px;background:#e3e3e3"></div>
<div class="abs" style="left:991px;top:414px;width:1px;height:23px;background:#e3e3e3"></div>
<div class="abs" style="left:320px;top:414px;width:34px;height:23px;background:#e38ef0"></div>
<div class="abs" style="left:275px;top:419px;width:12px;height:12px;border:1px solid #d9d9d9;background:#fff"></div>
<div class="cell" style="left:296px;top:420.5px;width:23px;text-align:center;font-size:9.55px;font-weight:normal;color:#5c5c5c;line-height:10px">K</div>
<div class="cell" style="left:319px;top:420.5px;width:30px;text-align:right;font-size:9.55px;font-weight:normal;color:#5c5c5c;line-height:10px">7</div>
<div class="cell" style="left:361px;top:420.5px;font-size:9.55px;font-weight:normal;color:#5c5c5c;line-height:10px">311234511</div>
<div class="cell" style="left:456.5px;top:415.5px;font-size:9.55px;font-weight:normal;color:#5c5c5c;line-height:10px">Murivo nosné (m3) z tehál pálených POROTHERM 30 KOMBI P 15<br>na pero a drážku, na maltu POROTHERM MM 50 (300x250x238)</div>
<div class="cell" style="left:753.5px;top:420.5px;font-size:9.55px;font-weight:normal;color:#5c5c5c;line-height:10px">m3</div>
<div class="cell" style="left:787px;top:420.5px;width:57px;text-align:right;font-size:9.55px;font-weight:normal;color:#5c5c5c;line-height:10px;color:#1d9ad6;-webkit-text-stroke:0.25px #1d9ad6">39,088</div>
<div class="cell" style="left:850px;top:420.5px;width:56px;text-align:right;font-size:9.55px;font-weight:normal;color:#5c5c5c;line-height:10px">252,02</div>
<div class="cell" style="left:912px;top:420.5px;width:67px;text-align:right;font-size:9.55px;font-weight:normal;color:#5c5c5c;line-height:10px">9 850,96</div>
<div class="abs" style="left:269px;top:437px;width:723px;height:19px;background:#ffffff;border-top:1px solid #e4e4e4"></div>
<div class="abs" style="left:269px;top:438px;width:1px;height:18px;background:#e3e3e3"></div>
<div class="abs" style="left:295px;top:438px;width:1px;height:18px;background:#e3e3e3"></div>
<div class="abs" style="left:319px;top:438px;width:1px;height:18px;background:#e3e3e3"></div>
<div class="abs" style="left:354px;top:438px;width:1px;height:18px;background:#e3e3e3"></div>
<div class="abs" style="left:433px;top:438px;width:1px;height:18px;background:#e3e3e3"></div>
<div class="abs" style="left:747px;top:438px;width:1px;height:18px;background:#e3e3e3"></div>
<div class="abs" style="left:787px;top:438px;width:1px;height:18px;background:#e3e3e3"></div>
<div class="abs" style="left:850px;top:438px;width:1px;height:18px;background:#e3e3e3"></div>
<div class="abs" style="left:912px;top:438px;width:1px;height:18px;background:#e3e3e3"></div>
<div class="abs" style="left:991px;top:438px;width:1px;height:18px;background:#e3e3e3"></div>
<div class="abs" style="left:275px;top:440px;width:12px;height:12px;border:1px solid #d9d9d9;background:#fff"></div>
<div class="cell" style="left:296px;top:442.0px;width:23px;text-align:center;font-size:9.2px;font-weight:bold;color:#262626;line-height:10px">D</div>
<div class="cell" style="left:383.0px;top:442.0px;font-size:9.2px;font-weight:bold;color:#262626;line-height:10px">PSV</div>
<svg class="abs" style="left:465.0px;top:444.0px" width="9" height="6" viewBox="0 0 9 6"><path d="M0.8 0.8L4.5 4.6L8.2 0.8" fill="none" stroke="#333" stroke-width="1.5"/></svg>
<div class="cell" style="left:479.5px;top:442.0px;font-size:9.2px;font-weight:bold;color:#262626;line-height:10px">Práce a dodávky PSV</div>
<div class="cell" style="left:912px;top:442.0px;width:67px;text-align:right;font-size:9.2px;font-weight:bold;color:#262626;line-height:10px">230,00</div>
<div class="abs" style="left:269px;top:456px;width:723px;height:19px;background:#ffffff;border-top:1px solid #e4e4e4"></div>
<div class="abs" style="left:269px;top:457px;width:1px;height:18px;background:#e3e3e3"></div>
<div class="abs" style="left:295px;top:457px;width:1px;height:18px;background:#e3e3e3"></div>
<div class="abs" style="left:319px;top:457px;width:1px;height:18px;background:#e3e3e3"></div>
<div class="abs" style="left:354px;top:457px;width:1px;height:18px;background:#e3e3e3"></div>
<div class="abs" style="left:433px;top:457px;width:1px;height:18px;background:#e3e3e3"></div>
<div class="abs" style="left:747px;top:457px;width:1px;height:18px;background:#e3e3e3"></div>
<div class="abs" style="left:787px;top:457px;width:1px;height:18px;background:#e3e3e3"></div>
<div class="abs" style="left:850px;top:457px;width:1px;height:18px;background:#e3e3e3"></div>
<div class="abs" style="left:912px;top:457px;width:1px;height:18px;background:#e3e3e3"></div>
<div class="abs" style="left:991px;top:457px;width:1px;height:18px;background:#e3e3e3"></div>
<div class="abs" style="left:275px;top:459px;width:12px;height:12px;border:1px solid #d9d9d9;background:#fff"></div>
<div class="cell" style="left:296px;top:461.0px;width:23px;text-align:center;font-size:9.2px;font-weight:bold;color:#262626;line-height:10px">D</div>
<div class="cell" style="left:394.5px;top:461.0px;font-size:9.2px;font-weight:bold;color:#262626;line-height:10px">711</div>
<svg class="abs" style="left:476.5px;top:463.0px" width="9" height="6" viewBox="0 0 9 6"><path d="M0.8 0.8L4.5 4.6L8.2 0.8" fill="none" stroke="#333" stroke-width="1.5"/></svg>
<div class="cell" style="left:491.0px;top:461.0px;font-size:9.2px;font-weight:bold;color:#262626;line-height:10px">Izolácie proti vode a vlhkosti</div>
<div class="cell" style="left:912px;top:461.0px;width:67px;text-align:right;font-size:9.2px;font-weight:bold;color:#262626;line-height:10px">230,00</div>
<div class="abs" style="left:269px;top:475px;width:723px;height:24px;background:#ffffff;border-top:1px solid #e4e4e4"></div>
<div class="abs" style="left:269px;top:476px;width:1px;height:23px;background:#e3e3e3"></div>
<div class="abs" style="left:295px;top:476px;width:1px;height:23px;background:#e3e3e3"></div>
<div class="abs" style="left:319px;top:476px;width:1px;height:23px;background:#e3e3e3"></div>
<div class="abs" style="left:354px;top:476px;width:1px;height:23px;background:#e3e3e3"></div>
<div class="abs" style="left:433px;top:476px;width:1px;height:23px;background:#e3e3e3"></div>
<div class="abs" style="left:747px;top:476px;width:1px;height:23px;background:#e3e3e3"></div>
<div class="abs" style="left:787px;top:476px;width:1px;height:23px;background:#e3e3e3"></div>
<div class="abs" style="left:850px;top:476px;width:1px;height:23px;background:#e3e3e3"></div>
<div class="abs" style="left:912px;top:476px;width:1px;height:23px;background:#e3e3e3"></div>
<div class="abs" style="left:991px;top:476px;width:1px;height:23px;background:#e3e3e3"></div>
<div class="abs" style="left:275px;top:481px;width:12px;height:12px;border:1px solid #d9d9d9;background:#fff"></div>
<div class="cell" style="left:296px;top:482.5px;width:23px;text-align:center;font-size:9.55px;font-weight:normal;color:#5c5c5c;line-height:10px">K</div>
<div class="cell" style="left:319px;top:482.5px;width:30px;text-align:right;font-size:9.55px;font-weight:normal;color:#5c5c5c;line-height:10px">34</div>
<div class="cell" style="left:361px;top:482.5px;font-size:9.55px;font-weight:normal;color:#5c5c5c;line-height:10px">711111001.S</div>
<div class="cell" style="left:456.5px;top:477.5px;font-size:9.55px;font-weight:normal;color:#5c5c5c;line-height:10px">Zhotovenie izolácie proti zemnej vlhkosti vodorovná náterom<br>penetračným za studena</div>
<div class="cell" style="left:753.5px;top:482.5px;font-size:9.55px;font-weight:normal;color:#5c5c5c;line-height:10px">m2</div>
<div class="cell" style="left:787px;top:482.5px;width:57px;text-align:right;font-size:9.55px;font-weight:normal;color:#5c5c5c;line-height:10px;color:#5c5c5c;-webkit-text-stroke:0">100,000</div>
<div class="cell" style="left:850px;top:482.5px;width:56px;text-align:right;font-size:9.55px;font-weight:normal;color:#5c5c5c;line-height:10px">0,76</div>
<div class="cell" style="left:912px;top:482.5px;width:67px;text-align:right;font-size:9.55px;font-weight:normal;color:#5c5c5c;line-height:10px">76,00</div>
<div class="abs" style="left:269px;top:499px;width:723px;height:19px;background:#ffffff;border-top:1px solid #e4e4e4"></div>
<div class="abs" style="left:269px;top:500px;width:1px;height:18px;background:#e3e3e3"></div>
<div class="abs" style="left:295px;top:500px;width:1px;height:18px;background:#e3e3e3"></div>
<div class="abs" style="left:319px;top:500px;width:1px;height:18px;background:#e3e3e3"></div>
<div class="abs" style="left:354px;top:500px;width:1px;height:18px;background:#e3e3e3"></div>
<div class="abs" style="left:433px;top:500px;width:1px;height:18px;background:#e3e3e3"></div>
<div class="abs" style="left:747px;top:500px;width:1px;height:18px;background:#e3e3e3"></div>
<div class="abs" style="left:787px;top:500px;width:1px;height:18px;background:#e3e3e3"></div>
<div class="abs" style="left:850px;top:500px;width:1px;height:18px;background:#e3e3e3"></div>
<div class="abs" style="left:912px;top:500px;width:1px;height:18px;background:#e3e3e3"></div>
<div class="abs" style="left:991px;top:500px;width:1px;height:18px;background:#e3e3e3"></div>
<div class="abs" style="left:275px;top:502px;width:12px;height:12px;border:1px solid #d9d9d9;background:#fff"></div>
<div class="cell" style="left:296px;top:504.0px;width:23px;text-align:center;font-size:9.55px;font-weight:normal;color:#5c5c5c;line-height:10px">K</div>
<div class="cell" style="left:319px;top:504.0px;width:30px;text-align:right;font-size:9.55px;font-weight:normal;color:#5c5c5c;line-height:10px">33</div>
<div class="cell" style="left:361px;top:504.0px;font-size:9.55px;font-weight:normal;color:#5c5c5c;line-height:10px">711113220.S</div>
<div class="cell" style="left:456.5px;top:504.0px;font-size:9.55px;font-weight:normal;color:#5c5c5c;line-height:10px">Zhotovenie náteru kryštalickou izoláciou na ploche vodorovnej</div>
<div class="cell" style="left:753.5px;top:504.0px;font-size:9.55px;font-weight:normal;color:#5c5c5c;line-height:10px">m2</div>
<div class="cell" style="left:787px;top:504.0px;width:57px;text-align:right;font-size:9.55px;font-weight:normal;color:#5c5c5c;line-height:10px;color:#5c5c5c;-webkit-text-stroke:0">100,000</div>
<div class="cell" style="left:850px;top:504.0px;width:56px;text-align:right;font-size:9.55px;font-weight:normal;color:#5c5c5c;line-height:10px">1,54</div>
<div class="cell" style="left:912px;top:504.0px;width:67px;text-align:right;font-size:9.55px;font-weight:normal;color:#5c5c5c;line-height:10px">154,00</div>
<div class="abs" style="left:269px;top:518px;width:723px;height:22px;background:#f2f2f2;border-top:1px solid #e4e4e4"></div>
<div class="abs" style="left:269px;top:519px;width:1px;height:21px;background:#e3e3e3"></div>
<div class="abs" style="left:295px;top:519px;width:1px;height:21px;background:#e3e3e3"></div>
<div class="abs" style="left:319px;top:519px;width:1px;height:21px;background:#e3e3e3"></div>
<div class="abs" style="left:354px;top:519px;width:1px;height:21px;background:#e3e3e3"></div>
<div class="abs" style="left:433px;top:519px;width:1px;height:21px;background:#e3e3e3"></div>
<div class="abs" style="left:747px;top:519px;width:1px;height:21px;background:#e3e3e3"></div>
<div class="abs" style="left:787px;top:519px;width:1px;height:21px;background:#e3e3e3"></div>
<div class="abs" style="left:850px;top:519px;width:1px;height:21px;background:#e3e3e3"></div>
<div class="abs" style="left:912px;top:519px;width:1px;height:21px;background:#e3e3e3"></div>
<div class="abs" style="left:991px;top:519px;width:1px;height:21px;background:#e3e3e3"></div>
<div class="abs" style="left:275px;top:523px;width:12px;height:12px;border:1px solid #d9d9d9;background:#fff"></div>
<div class="cell" style="left:300.5px;top:522.5px;letter-spacing:0.7px;font-size:11px;font-weight:bold;color:#1d9ad6;line-height:12px;-webkit-text-stroke:0.2px #1d9ad6">Z...</div>
<div class="cell" style="left:371.5px;top:522.5px;font-size:11px;font-weight:bold;color:#1d9ad6;line-height:12px;-webkit-text-stroke:0.2px #1d9ad6">05</div>
<svg class="abs" style="left:453.5px;top:526.5px" width="9" height="6" viewBox="0 0 9 6"><path d="M0.8 0.8L4.5 4.6L8.2 0.8" fill="none" stroke="#1d9ad6" stroke-width="1.5"/></svg>
<div class="cell" style="left:468.0px;top:522.5px;font-size:11px;font-weight:bold;color:#1d9ad6;line-height:12px;-webkit-text-stroke:0.2px #1d9ad6">Kanalizačná prípojka</div>
<div class="cell" style="left:912px;top:522.5px;width:67px;text-align:right;font-size:11px;font-weight:bold;color:#1d9ad6;line-height:12px;-webkit-text-stroke:0.2px #1d9ad6">3 808,81</div>
<div class="abs" style="left:269px;top:540px;width:723px;height:19px;background:#ffffff;border-top:1px solid #e4e4e4"></div>
<div class="abs" style="left:269px;top:541px;width:1px;height:18px;background:#e3e3e3"></div>
<div class="abs" style="left:295px;top:541px;width:1px;height:18px;background:#e3e3e3"></div>
<div class="abs" style="left:319px;top:541px;width:1px;height:18px;background:#e3e3e3"></div>
<div class="abs" style="left:354px;top:541px;width:1px;height:18px;background:#e3e3e3"></div>
<div class="abs" style="left:433px;top:541px;width:1px;height:18px;background:#e3e3e3"></div>
<div class="abs" style="left:747px;top:541px;width:1px;height:18px;background:#e3e3e3"></div>
<div class="abs" style="left:787px;top:541px;width:1px;height:18px;background:#e3e3e3"></div>
<div class="abs" style="left:850px;top:541px;width:1px;height:18px;background:#e3e3e3"></div>
<div class="abs" style="left:912px;top:541px;width:1px;height:18px;background:#e3e3e3"></div>
<div class="abs" style="left:991px;top:541px;width:1px;height:18px;background:#e3e3e3"></div>
<div class="abs" style="left:275px;top:543px;width:12px;height:12px;border:1px solid #d9d9d9;background:#fff"></div>
<div class="cell" style="left:296px;top:545.0px;width:23px;text-align:center;font-size:9.2px;font-weight:bold;color:#262626;line-height:10px">D</div>
<div class="cell" style="left:383.0px;top:545.0px;font-size:9.2px;font-weight:bold;color:#262626;line-height:10px">HSV</div>
<svg class="abs" style="left:465.0px;top:547.0px" width="9" height="6" viewBox="0 0 9 6"><path d="M0.8 0.8L4.5 4.6L8.2 0.8" fill="none" stroke="#333" stroke-width="1.5"/></svg>
<div class="cell" style="left:479.5px;top:545.0px;font-size:9.2px;font-weight:bold;color:#262626;line-height:10px">Práce a dodávky HSV</div>
<div class="cell" style="left:912px;top:545.0px;width:67px;text-align:right;font-size:9.2px;font-weight:bold;color:#262626;line-height:10px">3 808,81</div>
<div class="abs" style="left:269px;top:559px;width:723px;height:19px;background:#ffffff;border-top:1px solid #e4e4e4"></div>
<div class="abs" style="left:269px;top:560px;width:1px;height:18px;background:#e3e3e3"></div>
<div class="abs" style="left:295px;top:560px;width:1px;height:18px;background:#e3e3e3"></div>
<div class="abs" style="left:319px;top:560px;width:1px;height:18px;background:#e3e3e3"></div>
<div class="abs" style="left:354px;top:560px;width:1px;height:18px;background:#e3e3e3"></div>
<div class="abs" style="left:433px;top:560px;width:1px;height:18px;background:#e3e3e3"></div>
<div class="abs" style="left:747px;top:560px;width:1px;height:18px;background:#e3e3e3"></div>
<div class="abs" style="left:787px;top:560px;width:1px;height:18px;background:#e3e3e3"></div>
<div class="abs" style="left:850px;top:560px;width:1px;height:18px;background:#e3e3e3"></div>
<div class="abs" style="left:912px;top:560px;width:1px;height:18px;background:#e3e3e3"></div>
<div class="abs" style="left:991px;top:560px;width:1px;height:18px;background:#e3e3e3"></div>
<div class="abs" style="left:275px;top:562px;width:12px;height:12px;border:1px solid #d9d9d9;background:#fff"></div>
<div class="cell" style="left:296px;top:564.0px;width:23px;text-align:center;font-size:9.2px;font-weight:bold;color:#262626;line-height:10px">D</div>
<div class="cell" style="left:394.5px;top:564.0px;font-size:9.2px;font-weight:bold;color:#262626;line-height:10px">1</div>
<svg class="abs" style="left:476.5px;top:566.0px" width="9" height="6" viewBox="0 0 9 6"><path d="M0.8 0.8L4.5 4.6L8.2 0.8" fill="none" stroke="#333" stroke-width="1.5"/></svg>
<div class="cell" style="left:491.0px;top:564.0px;font-size:9.2px;font-weight:bold;color:#262626;line-height:10px">Zemné práce</div>
<div class="cell" style="left:912px;top:564.0px;width:67px;text-align:right;font-size:9.2px;font-weight:bold;color:#262626;line-height:10px">2 614,29</div>
<div class="abs" style="left:269px;top:578px;width:723px;height:19px;background:#ffffff;border-top:1px solid #e4e4e4"></div>
<div class="abs" style="left:269px;top:579px;width:1px;height:18px;background:#e3e3e3"></div>
<div class="abs" style="left:295px;top:579px;width:1px;height:18px;background:#e3e3e3"></div>
<div class="abs" style="left:319px;top:579px;width:1px;height:18px;background:#e3e3e3"></div>
<div class="abs" style="left:354px;top:579px;width:1px;height:18px;background:#e3e3e3"></div>
<div class="abs" style="left:433px;top:579px;width:1px;height:18px;background:#e3e3e3"></div>
<div class="abs" style="left:747px;top:579px;width:1px;height:18px;background:#e3e3e3"></div>
<div class="abs" style="left:787px;top:579px;width:1px;height:18px;background:#e3e3e3"></div>
<div class="abs" style="left:850px;top:579px;width:1px;height:18px;background:#e3e3e3"></div>
<div class="abs" style="left:912px;top:579px;width:1px;height:18px;background:#e3e3e3"></div>
<div class="abs" style="left:991px;top:579px;width:1px;height:18px;background:#e3e3e3"></div>
<div class="abs" style="left:320px;top:579px;width:34px;height:18px;background:#e38ef0"></div>
<div class="abs" style="left:275px;top:581px;width:12px;height:12px;border:1px solid #d9d9d9;background:#fff"></div>
<div class="cell" style="left:296px;top:583.0px;width:23px;text-align:center;font-size:9.55px;font-weight:normal;color:#5c5c5c;line-height:10px">K</div>
<div class="cell" style="left:319px;top:583.0px;width:30px;text-align:right;font-size:9.55px;font-weight:normal;color:#5c5c5c;line-height:10px">8</div>
<div class="cell" style="left:361px;top:583.0px;font-size:9.55px;font-weight:normal;color:#5c5c5c;line-height:10px">132201101.S</div>
<div class="cell" style="left:456.5px;top:583.0px;font-size:9.55px;font-weight:normal;color:#5c5c5c;line-height:10px">Výkop ryhy do šírky 600 mm v horn.3 do 100 m3</div>
<div class="cell" style="left:753.5px;top:583.0px;font-size:9.55px;font-weight:normal;color:#5c5c5c;line-height:10px">m3</div>
<div class="cell" style="left:787px;top:583.0px;width:57px;text-align:right;font-size:9.55px;font-weight:normal;color:#5c5c5c;line-height:10px;color:#1d9ad6;-webkit-text-stroke:0.25px #1d9ad6">40,800</div>
<div class="cell" style="left:850px;top:583.0px;width:56px;text-align:right;font-size:9.55px;font-weight:normal;color:#5c5c5c;line-height:10px">43,30</div>
<div class="cell" style="left:912px;top:583.0px;width:67px;text-align:right;font-size:9.55px;font-weight:normal;color:#5c5c5c;line-height:10px">1 766,64</div>
<div class="abs" style="left:269px;top:141px;width:1px;height:23px;background:#e3e3e3"></div>
<div class="abs" style="left:295px;top:141px;width:1px;height:23px;background:#e3e3e3"></div>
<div class="abs" style="left:319px;top:141px;width:1px;height:23px;background:#e3e3e3"></div>
<div class="abs" style="left:354px;top:141px;width:1px;height:23px;background:#e3e3e3"></div>
<div class="abs" style="left:433px;top:141px;width:1px;height:23px;background:#e3e3e3"></div>
<div class="abs" style="left:747px;top:141px;width:1px;height:23px;background:#e3e3e3"></div>
<div class="abs" style="left:787px;top:141px;width:1px;height:23px;background:#e3e3e3"></div>
<div class="abs" style="left:850px;top:141px;width:1px;height:23px;background:#e3e3e3"></div>
<div class="abs" style="left:912px;top:141px;width:1px;height:23px;background:#e3e3e3"></div>
<div class="abs" style="left:991px;top:141px;width:1px;height:23px;background:#e3e3e3"></div>
<div class="redbox" style="left:269px;top:251.4px;width:26px;height:45.2px;border-width:2.5px"></div>
<div class="redbox" style="left:269px;top:329px;width:28px;height:68px;border-width:2.5px"></div>
</div>
<div id="topstrip"></div>
</body></html>
